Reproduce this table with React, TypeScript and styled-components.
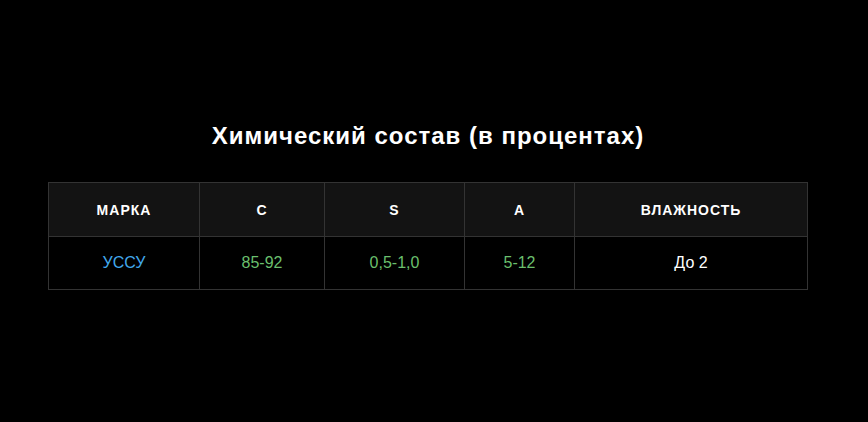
import React from 'react';
import styled, { createGlobalStyle } from 'styled-components';

const GlobalStyle = createGlobalStyle`
  html, body {
    margin: 0;
    padding: 0;
    background: #000000;
  }
  body {
    font-family: 'Liberation Sans', Arial, sans-serif;
    color: #ffffff;
  }
`;

const Page = styled.main`
  width: 868px;
  height: 422px;
  box-sizing: border-box;
  padding: 122px 60px 0 48px;
  background: #000000;
`;

const Title = styled.h2`
  margin: 0 0 32px;
  text-align: center;
  font-size: 24px;
  font-weight: bold;
  letter-spacing: 1px;
  line-height: 28px;
  color: #ffffff;
`;

const Table = styled.table`
  border-collapse: collapse;
  table-layout: fixed;
`;

const HeadCell = styled.th<{ width: number }>`
  width: ${p => p.width}px;
  height: 53px;
  padding: 0;
  background: #131313;
  border: 1px solid #333333;
  font-size: 14px;
  font-weight: bold;
  letter-spacing: 1px;
  text-transform: uppercase;
  text-align: center;
  color: #ffffff;
`;

type Tone = 'blue' | 'green' | 'white';

const toneColor: Record<Tone, string> = {
  blue: '#42a8ec',
  green: '#6abf6d',
  white: '#ffffff',
};

const Cell = styled.td<{ tone: Tone }>`
  height: 52px;
  padding: 0;
  background: #000000;
  border: 1px solid #333333;
  font-size: 16px;
  text-align: center;
  color: ${p => toneColor[p.tone]};
`;

const columns = [
  { label: 'Марка', width: 150 },
  { label: 'C', width: 124 },
  { label: 'S', width: 139 },
  { label: 'A', width: 109 },
  { label: 'Влажность', width: 232 },
];

const row: { value: string; tone: Tone }[] = [
  { value: 'УССУ', tone: 'blue' },
  { value: '85-92', tone: 'green' },
  { value: '0,5-1,0', tone: 'green' },
  { value: '5-12', tone: 'green' },
  { value: 'До 2', tone: 'white' },
];

const App: React.FC = () => (
  <>
    <GlobalStyle />
    <Page>
      <Title>Химический состав (в процентах)</Title>
      <Table>
        <thead>
          <tr>
            {columns.map(c => (
              <HeadCell key={c.label} width={c.width}>
                {c.label}
              </HeadCell>
            ))}
          </tr>
        </thead>
        <tbody>
          <tr>
            {row.map((c, i) => (
              <Cell key={i} tone={c.tone}>
                {c.value}
              </Cell>
            ))}
          </tr>
        </tbody>
      </Table>
    </Page>
  </>
);

export default App;
